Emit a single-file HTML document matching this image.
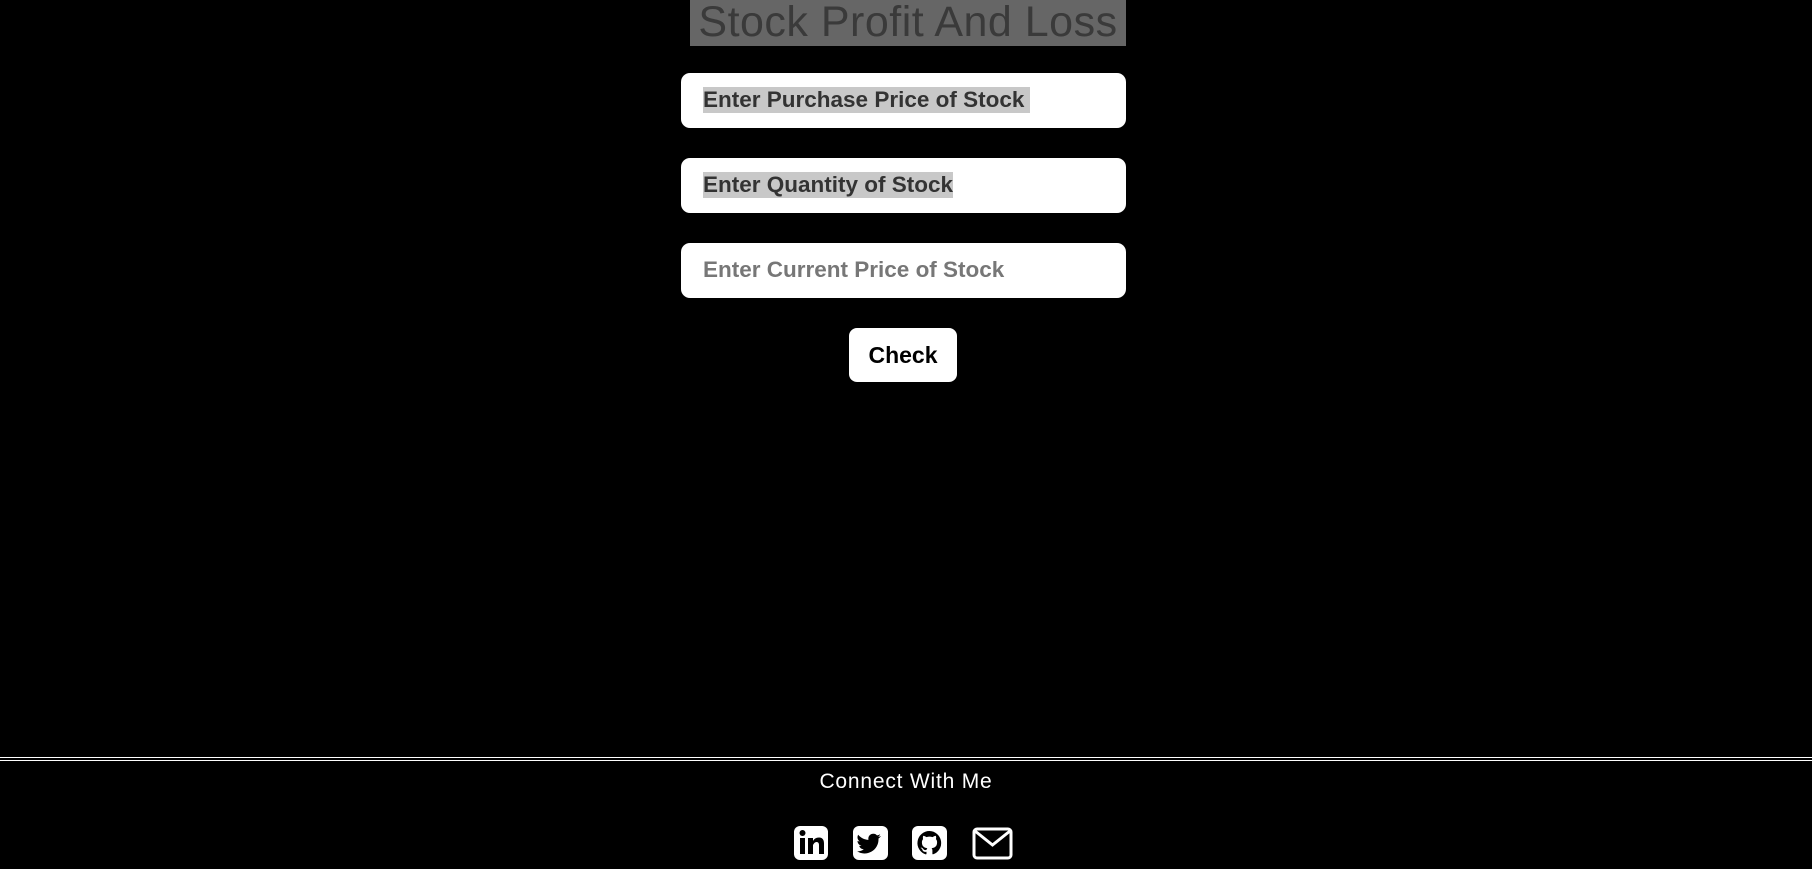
<!DOCTYPE html>
<html><head><style>
body{margin:0;width:1812px;height:869px;background:#000;position:relative;overflow:hidden;font-family:"Liberation Sans",sans-serif}
.title{position:absolute;left:690px;top:0;width:436px;height:46px;background:#666;color:#3a3a3a;font-size:43px;line-height:44px;text-align:center;white-space:nowrap;letter-spacing:0.5px}
.inp{position:absolute;left:681px;width:445px;height:55px;background:#fff;border-radius:9px}
.inp span{position:absolute;left:22px;top:14px;font-size:22.5px;font-weight:bold;line-height:26px;color:#333;white-space:nowrap}
.hl{background:#c8c8c8;padding-right:6px}
.btn{position:absolute;left:849px;top:328px;width:108px;height:54px;background:#fff;border-radius:8px;text-align:center;font-weight:bold;font-size:23px;line-height:54px;color:#000}
.line{position:absolute;left:0;width:1812px;height:1px;background:#fff}
.cwm{position:absolute;top:770px;width:100%;text-align:center;color:#fff;font-size:21px;letter-spacing:0.8px}
svg{position:absolute;top:826px}
</style></head><body>
<div class="title">Stock Profit And Loss</div>
<div class="inp" style="top:73px"><span class="hl">Enter Purchase Price of Stock</span></div>
<div class="inp" style="top:158px"><span class="hl" style="padding-right:0">Enter Quantity of Stock</span></div>
<div class="inp" style="top:243px"><span style="color:#777">Enter Current Price of Stock</span></div>
<div class="btn">Check</div>
<div class="line" style="top:757px"></div>
<div class="line" style="top:760px"></div>
<div class="cwm">Connect With Me</div>
<svg style="left:793px" width="36" height="34" viewBox="0 0 36 34"><rect x="1" y="0" width="34" height="34" rx="6" fill="#fff"/><rect x="7" y="12" width="5" height="16" fill="#000"/><circle cx="9.5" cy="7" r="3" fill="#000"/><path d="M15 12h5v3c1-2 3-3.5 6-3.5 4 0 5 3 5 6V28h-5V19c0-2-1-3-2.5-3S21 17 20 19v9h-5z" fill="#000"/></svg>
<svg style="left:853px" width="35" height="34" viewBox="0 0 35 34"><rect x="0" y="0" width="35" height="34" rx="6" fill="#fff"/><path d="M28 10c-1 .5-2 .8-3 .9 1-.7 1.8-1.6 2.2-2.7-1 .6-2 1-3.2 1.2a5 5 0 0 0-8.6 4.5C11.300 13.700 7.600 11.800 5.200 8.800c-1.400 2.400-.6 5.300 1.600 6.700-.8 0-1.600-.3-2.300-.6 0 2.400 1.700 4.400 4 4.900-.7.200-1.500.2-2.300.1.600 2 2.500 3.400 4.700 3.400A10 10 0 0 1 4 25.300 14 14 0 0 0 25.500 13.100V12.500c1-.7 1.800-1.500 2.500-2.500z" fill="#000"/></svg>
<svg style="left:912px" width="35" height="34" viewBox="0 0 35 34"><rect x="0" y="0" width="35" height="34" rx="6" fill="#fff"/><path d="M17.5 5a12 12 0 0 0-3.8 23.400c.6.1.8-.3.8-.6v-2.100c-3.300.7-4-1.600-4-1.600-.5-1.400-1.300-1.800-1.300-1.800-1.100-.7.1-.7.1-.7 1.200.1 1.800 1.200 1.800 1.200 1.100 1.800 2.800 1.300 3.500 1 .1-.8.4-1.300.8-1.600-2.700-.3-5.500-1.300-5.500-5.900 0-1.300.5-2.400 1.200-3.200-.1-.3-.5-1.500.1-3.200 0 0 1-.3 3.300 1.200a11 11 0 0 1 6 0c2.300-1.500 3.300-1.200 3.300-1.200.7 1.700.2 2.900.1 3.200.8.800 1.200 1.900 1.200 3.200 0 4.600-2.800 5.600-5.500 5.900.4.400.8 1.100.8 2.200v3.300c0 .3.2.7.8.6A12 12 0 0 0 17.500 5z" fill="#000"/></svg>
<svg style="left:972px" width="41" height="34" viewBox="0 0 41 34"><rect x="2" y="3" width="37" height="29" rx="3" fill="none" stroke="#fff" stroke-width="3"/><path d="M3 5l17.5 14L38 5" fill="none" stroke="#fff" stroke-width="3"/></svg>
</body></html>
